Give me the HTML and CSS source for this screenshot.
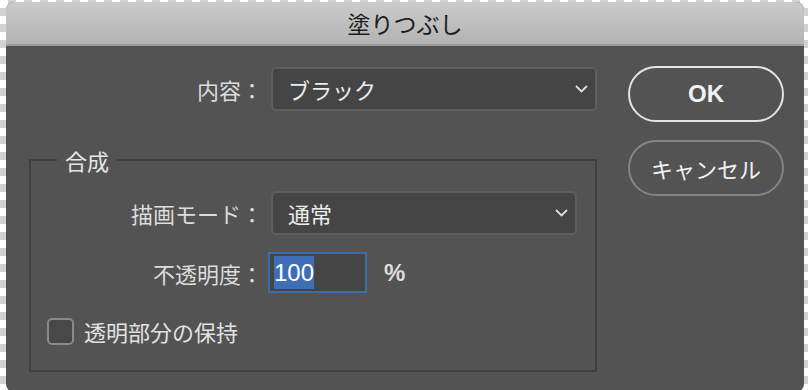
FILE: index.html
```html
<!DOCTYPE html>
<html>
<head>
  <title>塗りつぶし</title>
  <link rel="stylesheet" href="styles.css">
</head>
<body>

  <div class="dialog">
    <div class="titlebar">塗りつぶし</div>

    <div class="content">
      <div class="main">
        <!-- 内容 -->
        <div class="row row-top">
          <label class="label">内容：</label>
          <div class="select select-wide">
            <span>ブラック</span>
            <svg class="chevron" width="13" height="8" viewBox="0 0 13 8"><polyline points="1,1 6.5,6.5 12,1" /></svg>
          </div>
        </div>

        <!-- 合成 -->
        <fieldset class="group">
          <legend>合成</legend>
          <div class="group-body">
            <div class="row">
              <label class="label">描画モード：</label>
              <div class="select select-mode">
                <span>通常</span>
                <svg class="chevron" width="13" height="8" viewBox="0 0 13 8"><polyline points="1,1 6.5,6.5 12,1" /></svg>
              </div>
            </div>
            <div class="row row-opacity">
              <label class="label">不透明度：</label>
              <div class="number"><span class="selected">100</span></div>
              <span class="unit">%</span>
            </div>
            <div class="check-row">
              <span class="checkbox"></span>
              <span>透明部分の保持</span>
            </div>
          </div>
        </fieldset>
      </div>

      <div class="buttons">
        <button class="btn btn-ok">OK</button>
        <button class="btn btn-cancel">キャンセル</button>
      </div>
    </div>
  </div>

</body>
</html>
```

FILE: styles.css
```css
body {
  margin: 0;
  height: 390px;
  overflow: hidden;
  background-color: #fff;
  background-image: conic-gradient(#d2d2d2 25%, #fff 0 50%, #d2d2d2 0 75%, #fff 0);
  background-size: 16px 16px;
  font-family: "Noto Sans CJK JP", "Noto Sans", sans-serif;
}

.dialog {
  margin: 2px 4px 0 6px;
  height: 390px;
  background: #535353;
  border-radius: 8px;
  overflow: hidden;
}

.titlebar {
  height: 42px;
  line-height: 42px;
  text-align: center;
  font-size: 23px;
  color: #1c1c1c;
  background: linear-gradient(#cbcbcb, #b3b3b3);
  border-bottom: 2px solid #9c9c9c;
}

.content {
  display: flex;
  padding: 21px 0 0 23px;
}

.main {
  width: 568px;
}

.row {
  display: flex;
  align-items: center;
  gap: 8px;
}

.label {
  flex: none;
  width: 234px;
  text-align: right;
  font-size: 22px;
  color: #dcdcdc;
}

.group .label {
  width: 232px;
}

.select {
  box-sizing: border-box;
  height: 44px;
  display: flex;
  align-items: center;
  justify-content: space-between;
  padding: 0 7px 0 15px;
  background: #454545;
  border: 2px solid #5e5e5e;
  border-radius: 5px;
  font-size: 22px;
  color: #ececec;
}

.select-wide {
  width: 326px;
}

.select-mode {
  width: 306px;
}

.chevron polyline {
  fill: none;
  stroke: #dedede;
  stroke-width: 1.8;
}

.group {
  margin: 37px 0 0;
  padding: 0;
  border: 2px solid #3f3f3f;
  min-width: 0;
}

.group legend {
  margin-left: 26px;
  padding: 0 8px;
  font-size: 22px;
  line-height: 24px;
  color: #e6e6e6;
}

.group-body {
  padding: 19px 0 23px 0;
}

.row-opacity {
  margin-top: 17px;
}

.number {
  box-sizing: border-box;
  width: 99px;
  height: 41px;
  margin-left: -3px;
  padding: 2px 4px;
  background: #454545;
  border: 2px solid #3b6cab;
  font-family: "Liberation Sans", Arial, sans-serif;
  font-size: 24px;
  color: #fff;
}

.selected {
  display: inline-block;
  height: 33px;
  line-height: 34px;
  background: #3e6fb6;
}

.unit {
  margin-left: 9px;
  font-family: "Liberation Sans", Arial, sans-serif;
  font-size: 24px;
  font-weight: bold;
  color: #dcdcdc;
}

.check-row {
  display: flex;
  align-items: center;
  gap: 10px;
  margin: 22px 0 0 16px;
  font-size: 22px;
  color: #e2e2e2;
}

.checkbox {
  box-sizing: border-box;
  width: 27px;
  height: 27px;
  background: #484848;
  border: 2px solid #8a8a8a;
  border-radius: 5px;
}

.buttons {
  display: flex;
  flex-direction: column;
  gap: 18px;
  margin-left: 31px;
  margin-top: -1px;
}

.btn {
  width: 156px;
  height: 56px;
  border-radius: 28px;
  background: transparent;
  font-family: "Noto Sans CJK JP", "Noto Sans", sans-serif;
  font-size: 22px;
  color: #f2f2f2;
}

.btn-ok {
  border: 2px solid #e4e4e4;
  font-family: "Liberation Sans", Arial, sans-serif;
  font-size: 24px;
  font-weight: bold;
}

.btn-cancel {
  border: 2px solid #858585;
}
```
